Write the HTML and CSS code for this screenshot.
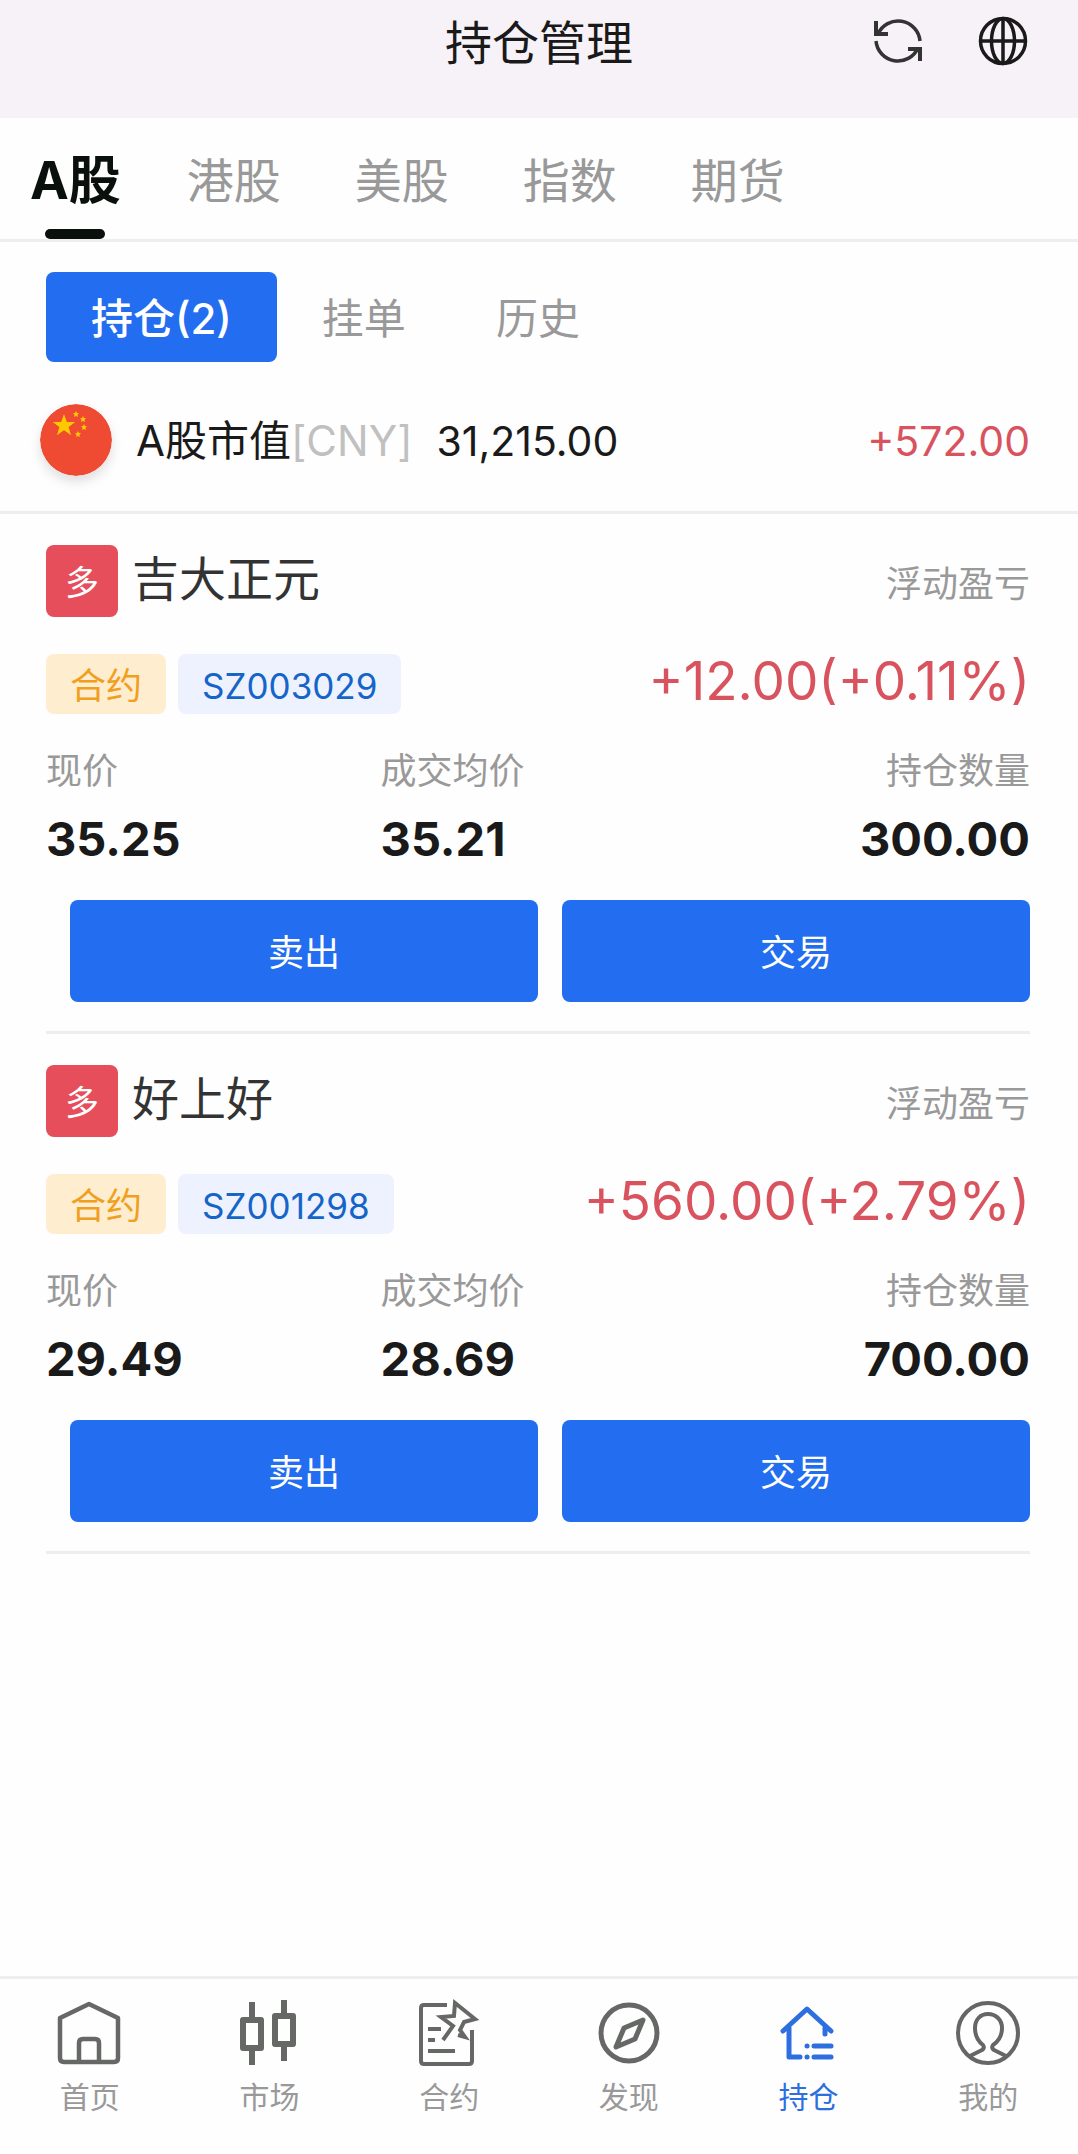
FILE: index.html
```html
<!DOCTYPE html>
<html lang="zh-CN">
<head>
    <meta charset="UTF-8">
    <meta name="viewport" content="width=device-width, initial-scale=1.0">
    <title>持仓管理</title>
    <link rel="stylesheet" href="styles.css">
</head>
<body>

    <header class="header">
        <h1>持仓管理</h1>
        <div class="header-actions">
            <button class="icon-btn" aria-label="刷新">
                <svg width="48" height="48" viewBox="0 0 48 48" fill="none" stroke="#333" stroke-width="3.500">
                    <path d="M46 24A22 22 0 0 0 4 17"/>
                    <path d="M2 24A22 22 0 0 0 44 31"/>
                    <path d="M2 4v13h12M46 44V32H34" stroke-width="4"/>
                </svg>
            </button>
            <button class="icon-btn" aria-label="语言">
                <svg width="50" height="50" viewBox="0 0 50 50" fill="none" stroke="#1a1a1a" stroke-width="3.500">
                    <circle cx="25" cy="25" r="22.500"/>
                    <ellipse cx="25" cy="25" rx="11.500" ry="22.500"/>
                    <path d="M25 2v46M2 25h46"/>
                </svg>
            </button>
        </div>
    </header>

    <nav class="market-tabs">
        <button class="market-tab active">A股</button>
        <button class="market-tab">港股</button>
        <button class="market-tab">美股</button>
        <button class="market-tab">指数</button>
        <button class="market-tab">期货</button>
    </nav>

    <div class="sub-tabs">
        <button class="sub-tab active">持仓(2)</button>
        <button class="sub-tab">挂单</button>
        <button class="sub-tab">历史</button>
    </div>

    <section class="summary">
        <svg class="flag" width="72" height="72" viewBox="0 0 72 72">
            <circle cx="36" cy="36" r="36" fill="#ef4a32"/>
            <g fill="#fcc800">
                <path d="M24 10l2.900 8h8.400l-6.700 5 2.500 8.200-7.100-4.900-7.100 4.900 2.500-8.200-6.700-5h8.400z"/>
                <path d="M36 7l1 2 2 .3-1.500 1.500.4 2.200-1.900-1-1.900 1 .4-2.200L33 9.300l2-.3z"/>
                <path d="M43 12l1 2 2 .3-1.500 1.500.4 2.200-1.900-1-1.900 1 .4-2.200-1.500-1.500 2-.3z"/>
                <path d="M44 20l1 2 2 .3-1.500 1.500.4 2.200-1.900-1-1.900 1 .4-2.200-1.500-1.500 2-.3z"/>
                <path d="M38 27l1 2 2 .3-1.500 1.500.4 2.200-1.900-1-1.900 1 .4-2.200-1.500-1.500 2-.3z"/>
            </g>
        </svg>
        <span class="summary-name">A股市值<span class="currency">[CNY]</span></span>
        <span class="summary-value">31,215.00</span>
        <span class="summary-profit">+572.00</span>
    </section>

    <main class="positions">
        <article class="position">
            <div class="row">
                <span class="side">多</span>
                <h2>吉大正元</h2>
                <span class="label">浮动盈亏</span>
            </div>
            <div class="row tags">
                <span class="tag tag-type">合约</span>
                <span class="tag tag-code">SZ003029</span>
                <span class="profit">+12.00(+0.11%)</span>
            </div>
            <dl class="stats">
                <div><dt>现价</dt><dd>35.25</dd></div>
                <div><dt>成交均价</dt><dd>35.21</dd></div>
                <div><dt>持仓数量</dt><dd>300.00</dd></div>
            </dl>
            <div class="actions">
                <button class="btn">卖出</button>
                <button class="btn">交易</button>
            </div>
        </article>

        <article class="position">
            <div class="row">
                <span class="side">多</span>
                <h2>好上好</h2>
                <span class="label">浮动盈亏</span>
            </div>
            <div class="row tags">
                <span class="tag tag-type">合约</span>
                <span class="tag tag-code">SZ001298</span>
                <span class="profit">+560.00(+2.79%)</span>
            </div>
            <dl class="stats">
                <div><dt>现价</dt><dd>29.49</dd></div>
                <div><dt>成交均价</dt><dd>28.69</dd></div>
                <div><dt>持仓数量</dt><dd>700.00</dd></div>
            </dl>
            <div class="actions">
                <button class="btn">卖出</button>
                <button class="btn">交易</button>
            </div>
        </article>
    </main>

    <nav class="bottom-nav">
        <a href="#">
            <svg width="72" height="72" viewBox="0 0 72 72" fill="none" stroke="#666866" stroke-width="4.500" stroke-linejoin="round">
                <path d="M35 7L64 21V61q0 4-4 4H10q-4 0-4-4V21z"/>
                <path d="M25 65V46q0-4 4-4h12q4 0 4 4v19"/>
            </svg>
            <span>首页</span>
        </a>
        <a href="#">
            <svg width="72" height="72" viewBox="0 0 72 72" fill="none" stroke="#666866" stroke-width="6" stroke-linejoin="round">
                <path d="M10 23h18v28H10zM42 19h18v28H42zM19 5v18M19 51v17M51 3v16M51 47v17"/>
            </svg>
            <span>市场</span>
        </a>
        <a href="#">
            <svg width="72" height="72" viewBox="0 0 72 72" fill="none" stroke="#666866" stroke-width="4">
                <path d="M34 8H11q-3 0-3 3v53q0 3 3 3h45q3 0 3-3V33" stroke-linejoin="round"/>
                <path d="M15 32h13M15 43h7M15 54h27"/>
                <path d="M30 43l10-14-12-9 13-1 1-13 20 16-11 3-4 8 5 7-7-2"/>
            </svg>
            <span>合约</span>
        </a>
        <a href="#">
            <svg width="72" height="72" viewBox="0 0 72 72" fill="none" stroke="#666866" stroke-width="5" stroke-linejoin="round">
                <circle cx="36" cy="36" r="28"/>
                <path d="M50 23l-8 19-19 8 8-19z"/>
            </svg>
            <span>发现</span>
        </a>
        <a href="#" class="active">
            <svg width="72" height="72" viewBox="0 0 72 72" fill="none" stroke="#2d6fdf" stroke-width="5" stroke-linecap="round" stroke-linejoin="round">
                <path d="M11 34L35 12l24 22M17 31v29h11M53 31v6"/>
                <path d="M35 49h.1M42 49h17M35 60h.1M42 60h17"/>
            </svg>
            <span>持仓</span>
        </a>
        <a href="#">
            <svg width="72" height="72" viewBox="0 0 72 72" fill="none" stroke="#666" stroke-width="4" stroke-linejoin="round">
                <circle cx="36" cy="36" r="30"/>
                <path d="M18 59l12-6q3-2 1-5-8-6-8-17c0-8 5-14 13-14s14 6 14 14q0 11-9 17-2 3 1 5l12 6"/>
            </svg>
            <span>我的</span>
        </a>
    </nav>

</body>
</html>
```
FILE: styles.css
```css
* {
    box-sizing: border-box;
}
body {
    margin: 0;
    min-height: 100vh;
    display: flex;
    flex-direction: column;
    background-color: #fefefe;
    color: #1a1a1a;
    font-family: Inter, "Noto Sans CJK SC", sans-serif;
    font-size: 36px;
    line-height: 48px;
}
h1, h2, dl, dd {
    margin: 0;
    font-size: 47px;
    font-weight: 400;
}
button {
    padding: 0;
    border: none;
    background: none;
    font: inherit;
    color: inherit;
    cursor: pointer;
}
svg {
    display: block;
}

/* header */
.header {
    display: grid;
    grid-template-columns: 1fr auto 1fr;
    align-items: start;
    padding: 10px 50px 42px;
    background-color: #f7f2f7;
}
.header h1 {
    grid-column: 2;
    line-height: 66px;
}
.header-actions {
    display: flex;
    justify-content: flex-end;
    align-items: center;
    gap: 56px;
    padding-top: 6px;
}

/* market tabs */
.market-tabs {
    display: flex;
    gap: 74px;
    padding: 0 30px;
    border-bottom: 3px solid #eee;
}
.market-tab {
    position: relative;
    height: 121px;
    padding-top: 5px;
    font-size: 47px;
    color: #999;
}
.market-tab.active {
    margin-right: -8px;
    font-size: 52px;
    font-weight: 700;
    color: #0a100c;
}
.market-tab.active::after {
    content: "";
    position: absolute;
    left: 50%;
    bottom: 0;
    width: 60px;
    height: 10px;
    margin-left: -30px;
    border-radius: 5px;
    background-color: #0a100c;
}

/* sub tabs */
.sub-tabs {
    display: flex;
    padding: 30px 46px 0;
}
.sub-tab {
    height: 90px;
    padding: 3px 45px 0;
    border-radius: 8px;
    font-size: 42px;
    color: #999;
}
.sub-tab.active {
    background-color: #226df0;
    color: #fff;
    font-weight: 500;
}

/* market value */
.summary {
    display: flex;
    align-items: center;
    padding: 42px 48px 35px 40px;
    border-bottom: 3px solid #eee;
    font-size: 41px;
}
.summary span {
    padding-top: 2px;
}
.flag {
    margin-right: 24px;
    border-radius: 50%;
    box-shadow: 0 6px 12px rgba(0, 0, 0, 0.12);
}
.summary-name {
    font-size: 42px;
}
.currency {
    color: #c0c0c0;
}
.summary-value {
    margin-left: 24px;
}
.summary-profit {
    margin-left: auto;
    color: #d9535f;
}

/* positions */
.positions {
    padding: 0 48px 0 46px;
}
.position {
    padding: 31px 0 29px;
    border-bottom: 3px solid #eee;
}
.row {
    display: flex;
    align-items: center;
}
.side {
    width: 72px;
    margin-right: 14px;
    padding-top: 4px;
    border-radius: 8px;
    background-color: #e64e5b;
    color: #fff;
    font-size: 34px;
    line-height: 68px;
    text-align: center;
}
.row h2 {
    padding-bottom: 4px;
    color: #333;
}
.label {
    margin-left: auto;
    padding-top: 5px;
    color: #999;
}
.tags {
    gap: 12px;
    margin-top: 37px;
}
.tag {
    padding: 4px 24px 0;
    border-radius: 8px;
    line-height: 56px;
}
.tag-type {
    background-color: #ffedcf;
    color: #f0a020;
}
.tag-code {
    background-color: #eef2ff;
    color: #1565c8;
    font-size: 35px;
}
.profit {
    margin-left: auto;
    padding-bottom: 6px;
    color: #d9535f;
    font-size: 53px;
}
.stats {
    display: grid;
    grid-template-columns: 34% 33% 33%;
    margin-top: 33px;
    line-height: 48px;
}
.stats dt {
    font-size: 36px;
    color: #999;
}
.stats dd {
    margin-top: 20px;
    font-size: 47px;
    font-weight: 700;
}
.stats div:last-child {
    text-align: right;
}
.actions {
    display: flex;
    gap: 24px;
    margin-top: 37px;
    padding-left: 24px;
}
.btn {
    flex: 1;
    height: 102px;
    padding-top: 4px;
    border-radius: 8px;
    background-color: #226df0;
    color: #fff;
}

/* bottom nav */
.bottom-nav {
    display: grid;
    grid-template-columns: repeat(6, 1fr);
    margin-top: auto;
    padding: 18px 0 33px;
    border-top: 3px solid #eee;
    font-size: 30px;
}
.bottom-nav a {
    display: flex;
    flex-direction: column;
    align-items: center;
    gap: 4px;
    color: #999;
    text-decoration: none;
}
.bottom-nav a.active {
    color: #2d6fdf;
}
```
